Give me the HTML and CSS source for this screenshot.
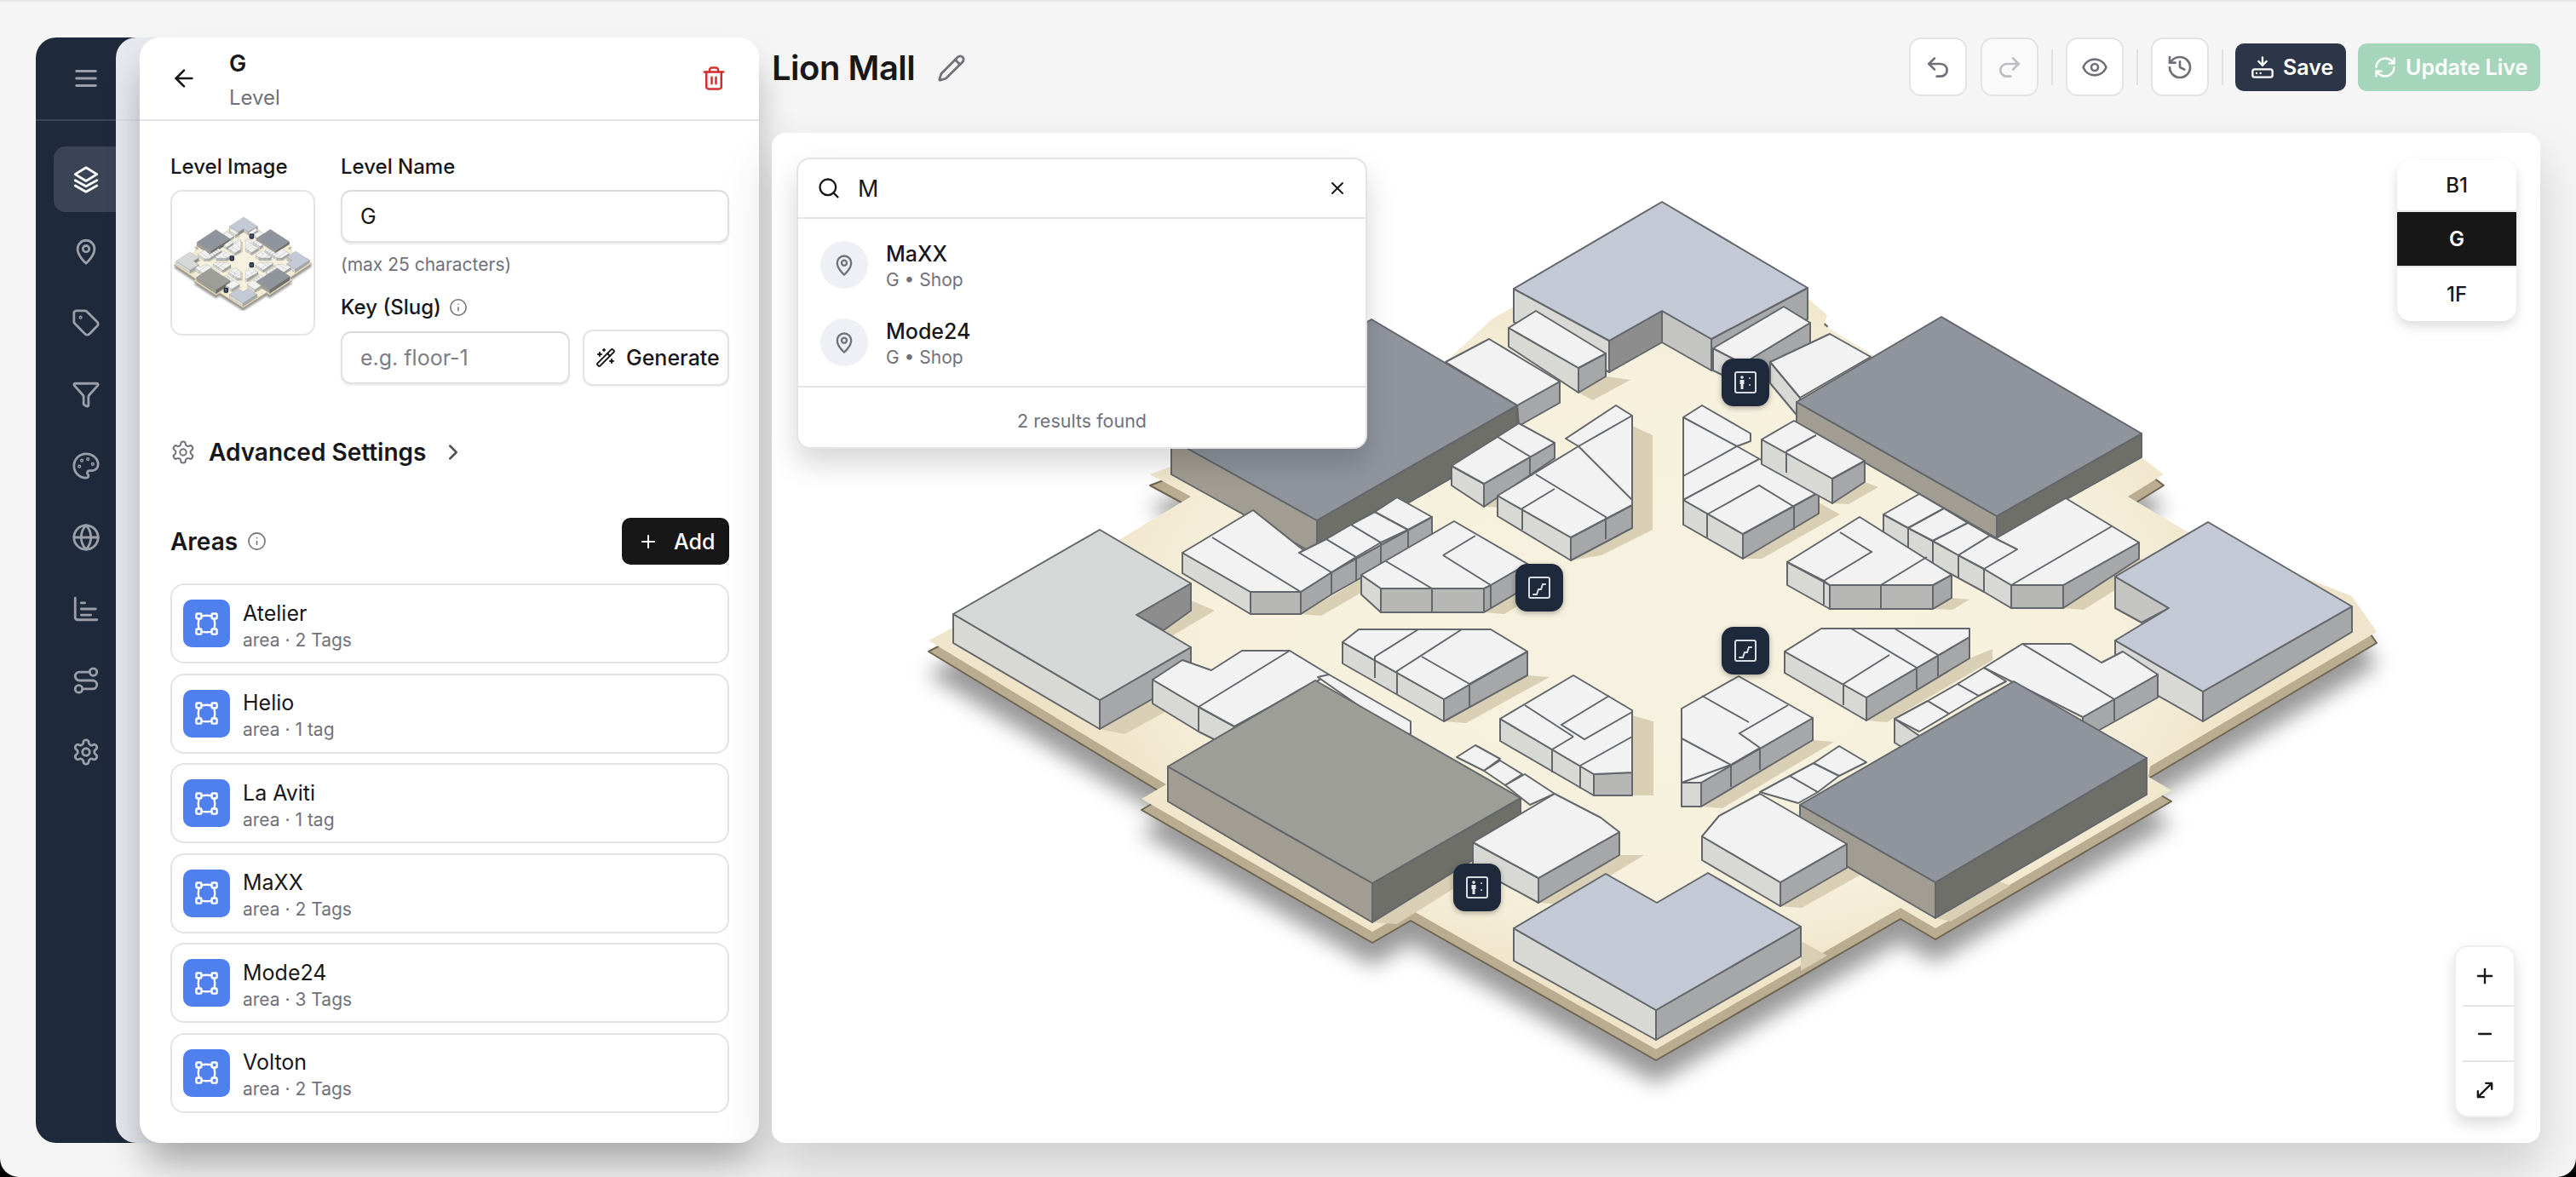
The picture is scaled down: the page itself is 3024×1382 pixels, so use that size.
FILE: index.html
```html
<!DOCTYPE html>
<html lang="en">
<head>
    <meta charset="UTF-8">
    <meta name="viewport" content="width=device-width, initial-scale=1.0">
    <title>Lion Mall</title>
    <link rel="stylesheet" href="styles.css">
</head>
<body>

<!-- icon set -->
<svg class="sprite" aria-hidden="true">
    <symbol id="i-menu" viewBox="0 0 24 24"><path d="M4 6h16M4 12h16M4 18h16"/></symbol>
    <symbol id="i-layers" viewBox="0 0 24 24"><path d="M12 2l9 5.5-9 5.5-9-5.5z"/><path d="M3 12.5l9 5 9-5"/><path d="M3 17l9 5 9-5"/></symbol>
    <symbol id="i-pin" viewBox="0 0 24 24"><path d="M19 10c0 6-7 12-7 12s-7-6-7-12a7 7 0 0 1 14 0z"/><circle cx="12" cy="10" r="2.6"/></symbol>
    <symbol id="i-tag" viewBox="0 0 24 24"><path d="M12.586 2.586A2 2 0 0 0 11.172 2H4a2 2 0 0 0-2 2v7.172a2 2 0 0 0 .586 1.414l8.704 8.704a2.426 2.426 0 0 0 3.42 0l6.58-6.58a2.426 2.426 0 0 0 0-3.42z"/><circle cx="7.5" cy="7.5" r=".5"/></symbol>
    <symbol id="i-filter" viewBox="0 0 24 24"><path d="M10 20a1 1 0 0 0 .553.895l2 1A1 1 0 0 0 14 21v-7a2 2 0 0 1 .517-1.341L21.74 4.67A1 1 0 0 0 21 3H3a1 1 0 0 0-.742 1.67l7.225 7.989A2 2 0 0 1 10 14z"/></symbol>
    <symbol id="i-palette" viewBox="0 0 24 24"><path d="M12 22a1 1 0 0 1 0-20 10 9 0 0 1 10 9 5 5 0 0 1-5 5h-2.25a1.75 1.75 0 0 0-1.4 2.8l.3.4a1.75 1.75 0 0 1-1.4 2.8z"/><circle cx="13.5" cy="6.5" r=".5"/><circle cx="17.5" cy="10.5" r=".5"/><circle cx="6.5" cy="12.5" r=".5"/><circle cx="8.5" cy="7.5" r=".5"/></symbol>
    <symbol id="i-globe" viewBox="0 0 24 24"><circle cx="12" cy="12" r="10"/><path d="M12 2a14.5 14.5 0 0 0 0 20 14.5 14.5 0 0 0 0-20"/><path d="M2 12h20"/></symbol>
    <symbol id="i-chart" viewBox="0 0 24 24"><path d="M3 3v16a2 2 0 0 0 2 2h16"/><path d="M8 7h3M8 12h12M8 17h8"/></symbol>
    <symbol id="i-route" viewBox="0 0 24 24"><circle cx="6" cy="19" r="3"/><path d="M9 19h8.5a3.5 3.5 0 0 0 0-7h-11a3.5 3.5 0 0 1 0-7H15"/><circle cx="18" cy="5" r="3"/></symbol>
    <symbol id="i-gear" viewBox="0 0 24 24"><path d="M12.22 2h-.44a2 2 0 0 0-2 2v.18a2 2 0 0 1-1 1.73l-.43.25a2 2 0 0 1-2 0l-.15-.08a2 2 0 0 0-2.73.73l-.22.38a2 2 0 0 0 .73 2.73l.15.1a2 2 0 0 1 1 1.72v.51a2 2 0 0 1-1 1.74l-.15.09a2 2 0 0 0-.73 2.73l.22.38a2 2 0 0 0 2.73.73l.15-.08a2 2 0 0 1 2 0l.43.25a2 2 0 0 1 1 1.73V20a2 2 0 0 0 2 2h.44a2 2 0 0 0 2-2v-.18a2 2 0 0 1 1-1.73l.43-.25a2 2 0 0 1 2 0l.15.08a2 2 0 0 0 2.73-.73l.22-.39a2 2 0 0 0-.73-2.73l-.15-.08a2 2 0 0 1-1-1.74v-.5a2 2 0 0 1 1-1.74l.15-.09a2 2 0 0 0 .73-2.73l-.22-.38a2 2 0 0 0-2.73-.73l-.15.08a2 2 0 0 1-2 0l-.43-.25a2 2 0 0 1-1-1.73V4a2 2 0 0 0-2-2z"/><circle cx="12" cy="12" r="3"/></symbol>
    <symbol id="i-back" viewBox="0 0 24 24"><path d="M12 19l-7-7 7-7"/><path d="M19 12H5"/></symbol>
    <symbol id="i-trash" viewBox="0 0 24 24"><path d="M3 6h18"/><path d="M19 6v14c0 1-1 2-2 2H7c-1 0-2-1-2-2V6"/><path d="M8 6V4c0-1 1-2 2-2h4c1 0 2 1 2 2v2"/><path d="M10 11v6M14 11v6"/></symbol>
    <symbol id="i-info" viewBox="0 0 24 24"><circle cx="12" cy="12" r="10"/><path d="M12 16v-4M12 8h.01"/></symbol>
    <symbol id="i-wand" viewBox="0 0 24 24"><path d="M21.64 3.64l-1.28-1.28a1.21 1.21 0 0 0-1.72 0L2.36 18.64a1.21 1.21 0 0 0 0 1.72l1.28 1.28a1.2 1.2 0 0 0 1.72 0L21.64 5.36a1.2 1.2 0 0 0 0-1.72"/><path d="M14 7l3 3M5 6v4M19 14v4M10 2v2M7 8H3M21 16h-4M11 3H9"/></symbol>
    <symbol id="i-chevron" viewBox="0 0 24 24"><path d="M9 18l6-6-6-6"/></symbol>
    <symbol id="i-plus" viewBox="0 0 24 24"><path d="M5 12h14M12 5v14"/></symbol>
    <symbol id="i-minus" viewBox="0 0 24 24"><path d="M6 12h12"/></symbol>
    <symbol id="i-area" viewBox="0 0 24 24"><path d="M19.5 7a24 24 0 0 1 0 10M4.5 7a24 24 0 0 0 0 10M7 19.5a24 24 0 0 0 10 0M7 4.5a24 24 0 0 1 10 0"/><rect x="17" y="17" width="5" height="5" rx="1"/><rect x="17" y="2" width="5" height="5" rx="1"/><rect x="2" y="17" width="5" height="5" rx="1"/><rect x="2" y="2" width="5" height="5" rx="1"/></symbol>
    <symbol id="i-pencil" viewBox="0 0 24 24"><path d="M21.174 6.812a1 1 0 0 0-3.986-3.987L3.842 16.174a2 2 0 0 0-.5.83l-1.321 4.352a.5.5 0 0 0 .623.622l4.353-1.32a2 2 0 0 0 .83-.497z"/><path d="M15 5l4 4"/></symbol>
    <symbol id="i-undo" viewBox="0 0 24 24"><path d="M9 14L4 9l5-5"/><path d="M4 9h10.5a5.5 5.5 0 0 1 0 11H11"/></symbol>
    <symbol id="i-redo" viewBox="0 0 24 24"><path d="M15 14l5-5-5-5"/><path d="M20 9H9.5a5.5 5.5 0 0 0 0 11H13"/></symbol>
    <symbol id="i-eye" viewBox="0 0 24 24"><path d="M2.062 12.348a1 1 0 0 1 0-.696 10.75 10.75 0 0 1 19.876 0 1 1 0 0 1 0 .696 10.75 10.75 0 0 1-19.876 0"/><circle cx="12" cy="12" r="3"/></symbol>
    <symbol id="i-history" viewBox="0 0 24 24"><path d="M3 12a9 9 0 1 0 9-9 9.75 9.75 0 0 0-6.74 2.74L3 8"/><path d="M3 3v5h5"/><path d="M12 7v5l4 2"/></symbol>
    <symbol id="i-save" viewBox="0 0 24 24"><path d="M12 2v8"/><path d="M16 6l-4 4-4-4"/><rect x="2" y="14" width="20" height="8" rx="2"/><path d="M6 18h.01M10 18h.01"/></symbol>
    <symbol id="i-sync" viewBox="0 0 24 24"><path d="M3 12a9 9 0 0 1 9-9 9.75 9.75 0 0 1 6.74 2.74L21 8"/><path d="M21 3v5h-5"/><path d="M21 12a9 9 0 0 1-9 9 9.75 9.75 0 0 1-6.74-2.74L3 16"/><path d="M8 16H3v5"/></symbol>
    <symbol id="i-search" viewBox="0 0 24 24"><circle cx="11" cy="11" r="8"/><path d="M21 21l-4.34-4.34"/></symbol>
    <symbol id="i-close" viewBox="0 0 24 24"><path d="M18 6L6 18M6 6l12 12"/></symbol>
    <symbol id="i-expand" viewBox="0 0 24 24"><path d="M11 19H5v-6M13 5h6v6M19 5L5 19"/></symbol>
</svg>

<div class="app">
    <nav class="rail">
        <div class="rail-head"><svg class="icon rail-icon"><use href="#i-menu"/></svg></div>
        <div class="rail-nav">
            <div class="rail-item active"><svg class="icon rail-icon"><use href="#i-layers"/></svg></div>
            <div class="rail-item"><svg class="icon rail-icon"><use href="#i-pin"/></svg></div>
            <div class="rail-item"><svg class="icon rail-icon"><use href="#i-tag"/></svg></div>
            <div class="rail-item"><svg class="icon rail-icon"><use href="#i-filter"/></svg></div>
            <div class="rail-item"><svg class="icon rail-icon"><use href="#i-palette"/></svg></div>
            <div class="rail-item"><svg class="icon rail-icon"><use href="#i-globe"/></svg></div>
            <div class="rail-item"><svg class="icon rail-icon"><use href="#i-chart"/></svg></div>
            <div class="rail-item"><svg class="icon rail-icon"><use href="#i-route"/></svg></div>
            <div class="rail-item"><svg class="icon rail-icon"><use href="#i-gear"/></svg></div>
        </div>
    </nav>
    <div class="rail-edge"><div class="rail-edge-head"></div></div>

    <aside class="panel">
        <header class="panel-head">
            <svg class="icon back-icon"><use href="#i-back"/></svg>
            <div class="panel-title">
                <div class="panel-name">G</div>
                <div class="panel-kind">Level</div>
            </div>
            <svg class="icon trash-icon"><use href="#i-trash"/></svg>
        </header>

        <div class="panel-body">
            <div class="level-form">
                <div class="level-image-col">
                    <label class="field-label">Level Image</label>
                    <div class="level-image">
                        <svg class="thumb" viewBox="1070 210 1740 1060" preserveAspectRatio="none"><use href="#map-art"/></svg>
                    </div>
                </div>
                <div class="level-fields">
                    <label class="field-label">Level Name</label>
                    <div class="input">G</div>
                    <div class="hint">(max 25 characters)</div>
                    <label class="field-label key-label">Key (Slug) <svg class="icon info-icon"><use href="#i-info"/></svg></label>
                    <div class="key-row">
                        <div class="input input-key placeholder">e.g. floor-1</div>
                        <button class="generate"><svg class="icon wand-icon"><use href="#i-wand"/></svg>Generate</button>
                    </div>
                </div>
            </div>

            <div class="advanced">
                <svg class="icon adv-gear"><use href="#i-gear"/></svg>
                <span>Advanced Settings</span>
                <svg class="icon adv-chevron"><use href="#i-chevron"/></svg>
            </div>

            <div class="areas-head">
                <div class="areas-title">Areas <svg class="icon areas-info"><use href="#i-info"/></svg></div>
                <button class="add"><svg class="icon add-icon"><use href="#i-plus"/></svg>Add</button>
            </div>

            <div class="area-list">
                <div class="area-card">
                    <div class="area-icon"><svg class="icon"><use href="#i-area"/></svg></div>
                    <div class="area-text"><div class="area-name">Atelier</div><div class="area-meta">area · 2 Tags</div></div>
                </div>
                <div class="area-card">
                    <div class="area-icon"><svg class="icon"><use href="#i-area"/></svg></div>
                    <div class="area-text"><div class="area-name">Helio</div><div class="area-meta">area · 1 tag</div></div>
                </div>
                <div class="area-card">
                    <div class="area-icon"><svg class="icon"><use href="#i-area"/></svg></div>
                    <div class="area-text"><div class="area-name">La Aviti</div><div class="area-meta">area · 1 tag</div></div>
                </div>
                <div class="area-card">
                    <div class="area-icon"><svg class="icon"><use href="#i-area"/></svg></div>
                    <div class="area-text"><div class="area-name">MaXX</div><div class="area-meta">area · 2 Tags</div></div>
                </div>
                <div class="area-card">
                    <div class="area-icon"><svg class="icon"><use href="#i-area"/></svg></div>
                    <div class="area-text"><div class="area-name">Mode24</div><div class="area-meta">area · 3 Tags</div></div>
                </div>
                <div class="area-card">
                    <div class="area-icon"><svg class="icon"><use href="#i-area"/></svg></div>
                    <div class="area-text"><div class="area-name">Volton</div><div class="area-meta">area · 2 Tags</div></div>
                </div>
            </div>
        </div>
    </aside>

    <main class="main">
        <div class="toolbar">
            <div class="title-wrap">
                <h1 class="title">Lion Mall</h1>
                <svg class="icon pencil-icon"><use href="#i-pencil"/></svg>
            </div>
            <div class="tools">
                <button class="tool tool-first"><svg class="icon"><use href="#i-undo"/></svg></button>
                <button class="tool disabled"><svg class="icon"><use href="#i-redo"/></svg></button>
                <span class="tool-sep"></span>
                <button class="tool"><svg class="icon"><use href="#i-eye"/></svg></button>
                <span class="tool-sep"></span>
                <button class="tool"><svg class="icon"><use href="#i-history"/></svg></button>
                <span class="tool-sep"></span>
                <button class="btn-save"><svg class="icon"><use href="#i-save"/></svg>Save</button>
                <button class="btn-live"><svg class="icon"><use href="#i-sync"/></svg>Update Live</button>
            </div>
        </div>

        <section class="canvas">
            <svg class="map" viewBox="906 156 2076 1186">
                <defs>
                    <radialGradient id="floor-fill" gradientUnits="userSpaceOnUse" cx="1950" cy="740" r="860" gradientTransform="translate(0 296) scale(1 .6)">
                        <stop offset="0" stop-color="#f7f2df"/>
                        <stop offset=".62" stop-color="#f6f0dc"/>
                        <stop offset=".85" stop-color="#eee2c5"/>
                        <stop offset="1" stop-color="#f0e6cf"/>
                    </radialGradient>
                    <g id="m-box"><rect x="-28" y="-28" width="56" height="56" rx="14" class="mk-bg"/><rect x="-12" y="-12" width="24" height="24" rx="2" class="mk-line"/></g>
                    <g id="m-lift"><use href="#m-box"/><circle cx="-4" cy="-6" r="1.8" class="mk-fill"/><path d="M-6.5 -3h5v5h-1v6h-3v-6h-1z" class="mk-fill"/><path d="M5 -5v.1M5 3v.1" class="mk-line"/></g>
                    <g id="m-stair"><use href="#m-box"/><path d="M-7 8h4l2-6h3l2-6h3" class="mk-line"/></g>
                </defs>
                <g id="map-art">
                    <!-- slab -->
                    <polygon class="slab-edge" points="1951,260 2122,350 2145,370 2141,382 2199,417 2514,537 2540,557 2498,583 2567,624 2761,700 2790,742 2524,900 2522,912 2549,928 2272,1090 2231,1066 1944,1232 1656,1068 1611,1094 1340,938 1369,921 1090,752 1315,633 1398,583 1350,557 1697,425 1751,375 1777,360" transform="translate(0 13)"/>
                    <polygon class="slab" points="1951,260 2122,350 2145,370 2141,382 2199,417 2514,537 2540,557 2498,583 2567,624 2761,700 2790,742 2524,900 2522,912 2549,928 2272,1090 2231,1066 1944,1232 1656,1068 1611,1094 1340,938 1369,921 1090,752 1315,633 1398,583 1350,557 1697,425 1751,375 1777,360"/>

                    <!-- cast shadows -->
                    <g class="cast">
                        <polygon points="1853,461 1885,442 1914,446 1870,470"/>
                        <polygon points="1916,500 1940,511 1940,622 1880,652 1844,658 1916,620"/>
                        <polygon points="1742,595 1825,538 1845,542 1770,596"/>
                        <polygon points="1527,721 1681,632 1705,634 1551,723"/>
                        <polygon points="1742,719 1793,689 1817,691 1766,721"/>
                        <polygon points="2135,590 2160,604 2068,656 2046,656 2135,603"/>
                        <polygon points="2151,591 2189,566 2205,572 2170,592"/>
                        <polygon points="2269,715 2291,702 2312,704 2292,716"/>
                        <polygon points="2422,714 2511,656 2535,660 2446,716"/>
                        <polygon points="2191,846 2312,773 2339,762 2339,775 2215,848"/>
                        <polygon points="1695,847 1793,793 1819,795 1721,849"/>
                        <polygon points="1916,840 1941,847 1941,934 1916,934"/>
                        <polygon points="1997,947 2128,869 2153,871 2022,949"/>
                        <polygon points="2090,1064 2168,1019 2195,1021 2115,1066"/>
                        <polygon points="1806,1060 1901,1004 1930,1004 1835,1062"/>
                        <polygon points="1398,705 1426,717 1370,750 1366,738"/>
                        <polygon points="1291,856 1353,820 1375,832 1320,862"/>
                        <polygon points="2114,1105 2145,1122 2114,1140"/>
                        <polygon points="1611,1083 1785,975 1800,985 1640,1085"/>
                        <polygon points="2272,1078 2345,1034 2360,1040 2290,1082"/>
                    </g>

                    <!-- top wing -->
                    <g class="blocks">
                        <polygon class="wall-l" points="1777,339 1889,400 1889,437 1777,378"/>
                        <polygon class="wall-d" points="1889,400 1951,365 1951,402 1889,437"/>
                        <polygon class="wall-l2" points="1951,365 2009,398 2009,435 1951,402"/>
                        <polygon class="wall-r" points="2009,398 2122,338 2122,375 2009,435"/>
                        <polygon class="roof-blue" points="1951,237 2122,338 2009,398 1951,365 1889,400 1777,339"/>

                        <polygon class="wall-l" points="1771,385 1853,432 1853,461 1771,407"/>
                        <polygon class="wall-r" points="1853,432 1885,415 1885,442 1853,461"/>
                        <polygon class="roof" points="1803,365 1885,415 1853,432 1771,385"/>
                        <polygon class="wall-r" points="1781,476 1831,448 1831,473 1783,500"/>
                        <polygon class="roof" points="1748,398 1831,448 1781,476 1697,425"/>

                        <polygon class="wall-l" points="2011,409 2046,427 2046,452 2011,435"/>
                        <polygon class="wall-r" points="2046,427 2125,379 2125,404 2046,452"/>
                        <polygon class="roof" points="2011,409 2094,360 2125,379 2046,427"/>
                        <polygon class="wall-l" points="2078,425 2113,467 2113,492 2078,450"/>
                        <polygon class="roof" points="2078,425 2148,392 2196,419 2113,467"/>

                        <!-- dark anchors, upper pair -->
                        <polygon class="wall-warm" points="1375,516 1546,611 1546,652 1375,557"/>
                        <polygon class="wall-dark" points="1546,611 1781,476 1781,517 1546,652"/>
                        <polygon class="roof-dark" points="1610,375 1781,476 1546,611 1375,516"/>
                        <polygon class="wall-warm" points="2109,472 2344,606 2344,632 2109,497"/>
                        <polygon class="wall-dark" points="2344,606 2514,509 2514,537 2344,632"/>
                        <polygon class="roof-dark" points="2279,372 2514,509 2344,606 2109,472"/>

                        <!-- upper centre clusters -->
                        <polygon class="wall-l" points="1704,547 1742,568 1742,595 1704,570"/>
                        <polygon class="wall-r" points="1742,568 1825,520 1825,538 1742,595"/>
                        <polygon class="roof" points="1704,547 1783,497 1825,520 1742,568"/>
                        <path class="seam" d="M1758,513L1796,536V557"/>

                        <polygon class="wall-l" points="1758,582 1844,631 1844,658 1758,606"/>
                        <polygon class="wall-r" points="1844,631 1916,593 1916,620 1844,658"/>
                        <polygon class="roof" points="1758,582 1853,524 1838,515 1897,476 1916,488 1916,593 1844,631"/>
                        <path class="seam" d="M1853,524L1916,488M1853,524L1916,587M1803,557L1885,607V633M1825,574L1787,597V622"/>

                        <polygon class="wall-l" points="1976,587 2046,627 2046,656 1976,616"/>
                        <polygon class="wall-r" points="2046,627 2135,578 2135,603 2046,656"/>
                        <polygon class="roof" points="1976,490 1998,476 2055,509 2055,518 2039,524 2135,578 2046,627 1976,587"/>
                        <path class="seam" d="M1976,490L2039,524M1976,559L2039,524M1976,587L2065,539M2004,604L2065,570L2106,595V622M2004,604V631"/>

                        <polygon class="wall-l" points="2068,516 2151,562 2151,591 2068,545"/>
                        <polygon class="wall-r" points="2151,562 2189,541 2189,566 2151,591"/>
                        <polygon class="roof" points="2068,516 2106,494 2189,541 2151,562"/>
                        <path class="seam" d="M2097,530L2132,511M2097,530V555"/>

                        <!-- left upper shops -->
                        <polygon class="wall-l" points="1388,649 1468,695 1468,721 1388,673"/>
                        <polygon class="wall-f" points="1468,695 1527,695 1527,721 1468,721"/>
                        <polygon class="wall-r" points="1527,695 1563,672 1681,607 1681,632 1563,698 1527,721"/>
                        <polygon class="roof" points="1388,649 1471,599 1563,672 1527,695 1468,695"/>
                        <polygon class="roof" points="1525,649 1557,633 1592,654 1563,672"/>
                        <polygon class="roof" points="1557,633 1586,616 1621,637 1592,654"/>
                        <polygon class="roof" points="1586,616 1614,601 1653,622 1621,637"/>
                        <polygon class="roof" points="1614,601 1640,584 1681,607 1653,622"/>
                        <path class="seam" d="M1423,631L1527,695M1563,672V698M1592,654V682M1621,637V665M1653,622V650"/>

                        <polygon class="wall-l" points="1598,675 1621,691 1621,719 1598,698"/>
                        <polygon class="wall-f" points="1621,691 1742,691 1742,719 1621,719"/>
                        <polygon class="wall-r" points="1742,691 1793,662 1793,689 1742,719"/>
                        <polygon class="roof" points="1598,675 1707,612 1793,662 1750,687 1742,691 1621,691"/>
                        <path class="seam" d="M1627,659L1681,691V719M1694,652L1732,629M1694,652L1750,687V714"/>

                        <!-- right upper shops -->
                        <polygon class="wall-l" points="2211,604 2329,668 2329,695 2211,631"/>
                        <polygon class="wall-l" points="2329,668 2361,687 2361,714 2329,695"/>
                        <polygon class="wall-f" points="2361,687 2422,687 2422,714 2361,714"/>
                        <polygon class="wall-r" points="2422,687 2511,637 2511,656 2422,714"/>
                        <polygon class="roof" points="2345,631 2425,585 2511,637 2422,687 2361,687 2329,668"/>
                        <polygon class="roof" points="2211,604 2253,580 2282,597 2240,620"/>
                        <polygon class="roof" points="2240,620 2282,597 2310,614 2269,635"/>
                        <polygon class="roof" points="2269,635 2310,614 2336,629 2299,652"/>
                        <polygon class="roof" points="2299,652 2336,629 2368,645 2329,668"/>
                        <path class="seam" d="M2479,618L2361,687M2240,620V647M2269,635V662M2299,652V679"/>

                        <polygon class="wall-l" points="2098,660 2148,687 2148,715 2098,687"/>
                        <polygon class="wall-f" points="2148,687 2269,687 2269,715 2148,715"/>
                        <polygon class="wall-r" points="2269,687 2291,675 2291,702 2269,715"/>
                        <polygon class="roof" points="2098,660 2183,607 2291,675 2269,687 2148,687 2141,682"/>
                        <path class="seam" d="M2160,625L2197,648L2141,682V710M2262,654L2208,687V715"/>

                        <!-- side wings -->
                        <polygon class="wall-d" points="1334,722 1398,685 1398,717 1366,740"/>
                        <polygon class="wall-l" points="1119,721 1291,822 1291,856 1119,755"/>
                        <polygon class="wall-r" points="1291,822 1398,760 1398,795 1291,856"/>
                        <polygon class="roof-light" points="1119,721 1291,622 1398,685 1334,722 1398,760 1291,822"/>

                        <polygon class="wall-l2" points="2483,677 2546,714 2514,731 2483,714"/>
                        <polygon class="wall-l" points="2483,752 2586,812 2586,847 2483,788"/>
                        <polygon class="wall-r" points="2586,812 2761,712 2761,742 2586,847"/>
                        <polygon class="roof-blue" points="2592,613 2761,712 2586,812 2483,752 2546,714 2483,677"/>

                        <!-- lower centre clusters -->
                        <polygon class="wall-l" points="1576,754 1695,821 1695,847 1576,779"/>
                        <polygon class="wall-r" points="1695,821 1793,765 1793,793 1695,847"/>
                        <polygon class="roof" points="1576,754 1595,739 1750,739 1793,765 1695,821"/>
                        <path class="seam" d="M1665,739L1614,771V796M1716,739L1640,788V815M1669,771L1725,803V830M1793,765L1725,803"/>

                        <polygon class="wall-l" points="2095,765 2191,819 2191,846 2095,790"/>
                        <polygon class="wall-r" points="2191,819 2312,748 2312,773 2191,846"/>
                        <polygon class="roof" points="2095,765 2138,738 2312,738 2312,748 2191,819"/>
                        <path class="seam" d="M2224,738L2275,769V794M2173,738L2250,784V809M2218,769L2164,803V828"/>

                        <polygon class="wall-l" points="1761,844 1871,909 1871,934 1761,870"/>
                        <polygon class="wall-f" points="1871,909 1916,907 1916,934 1871,934"/>
                        <polygon class="roof" points="1761,844 1847,793 1916,834 1916,907 1871,909"/>
                        <path class="seam" d="M1790,828L1847,865M1889,817L1833,851L1860,868L1916,836M1822,880L1847,865M1855,899L1916,865M1822,880V907M1855,899V926"/>

                        <polygon class="wall-l" points="1974,919 1997,919 1997,947 1974,947"/>
                        <polygon class="wall-r" points="1997,919 2128,843 2128,869 1997,947"/>
                        <polygon class="roof" points="1974,832 2041,794 2128,843 1997,919 1974,919"/>
                        <path class="seam" d="M1998,817L2053,848M2099,828L2042,861L2066,878M1974,867L2032,898V924M2066,878V904M1974,919L2032,898M2066,878L2032,898"/>

                        <!-- lower shops -->
                        <polygon class="wall-l" points="1353,798 1407,830 1449,853 1449,880 1407,859 1353,826"/>
                        <polygon class="roof" points="1353,798 1388,775 1422,787 1458,764 1514,764 1560,792 1449,853 1407,830"/>
                        <path class="seam" d="M1407,830L1514,764M1407,830V859"/>
                        <polygon class="roof" points="1547,795 1560,792 1656,847 1656,862 1640,860"/>

                        <polygon class="wall-l" points="2224,844 2262,870 2262,895 2224,872"/>
                        <polygon class="roof" points="2224,844 2263,823 2288,838 2253,859"/>
                        <polygon class="roof" points="2263,823 2298,803 2323,817 2288,838"/>
                        <polygon class="roof" points="2298,803 2329,784 2355,800 2323,817"/>
                        <polygon class="wall-r" points="2445,842 2533,792 2533,819 2445,868"/>
                        <polygon class="roof" points="2329,784 2374,756 2431,756 2467,778 2492,765 2533,792 2445,842"/>
                        <path class="seam" d="M2374,756L2482,821V847"/>

                        <!-- dark anchors, lower pair -->
                        <polygon class="wall-warm" points="1371,900 1611,1037 1611,1083 1371,941"/>
                        <polygon class="wall-dark" points="1611,1037 1785,937 1785,975 1611,1083"/>
                        <polygon class="roof-grey" points="1544,799 1785,937 1611,1037 1371,900"/>

                        <polygon class="wall-warm" points="2113,945 2272,1036 2272,1078 2113,985"/>
                        <polygon class="wall-dark" points="2272,1036 2520,890 2520,933 2272,1078"/>

                        <polygon class="roof" points="2066,930 2101,911 2134,930 2111,943"/>
                        <polygon class="roof" points="2101,911 2129,896 2159,911 2134,930"/>
                        <polygon class="roof" points="2129,896 2159,876 2191,895 2159,911"/>
                        <polygon class="roof-dark" points="2364,800 2520,890 2272,1036 2113,945"/>

                        <polygon class="roof" points="1710,889 1732,875 1761,891 1742,905"/>
                        <polygon class="roof" points="1742,905 1761,893 1787,909 1767,922"/>
                        <polygon class="roof" points="1767,922 1790,909 1825,932 1796,945"/>

                        <polygon class="wall-l" points="1729,989 1806,1031 1806,1060 1729,1018"/>
                        <polygon class="wall-r" points="1806,1031 1901,977 1901,1004 1806,1060"/>
                        <polygon class="roof" points="1729,989 1825,932 1879,960 1901,977 1806,1031"/>

                        <polygon class="wall-l" points="1998,982 2090,1036 2090,1064 1998,1010"/>
                        <polygon class="wall-r" points="2090,1036 2168,991 2168,1019 2090,1064"/>
                        <polygon class="roof" points="1998,982 2018,958 2066,932 2168,991 2090,1036"/>

                        <polygon class="wall-l" points="1777,1090 1944,1186 1944,1221 1777,1128"/>
                        <polygon class="wall-r" points="1944,1186 2114,1088 2114,1123 1944,1221"/>
                        <polygon class="roof-blue" points="1777,1090 1885,1026 1945,1060 2005,1025 2114,1088 1944,1186"/>
                    </g>

                    <use href="#m-lift" x="2049" y="449"/>
                    <use href="#m-stair" x="1807" y="690"/>
                    <use href="#m-stair" x="2049" y="764"/>
                    <use href="#m-lift" x="1734" y="1042"/>
                </g>
            </svg>

            <div class="search">
                <div class="search-head">
                    <svg class="icon search-icon"><use href="#i-search"/></svg>
                    <span class="search-value">M</span>
                    <svg class="icon close-icon"><use href="#i-close"/></svg>
                </div>
                <div class="search-list">
                    <div class="result">
                        <div class="result-icon"><svg class="icon"><use href="#i-pin"/></svg></div>
                        <div class="result-text"><div class="result-name">MaXX</div><div class="result-meta">G • Shop</div></div>
                    </div>
                    <div class="result">
                        <div class="result-icon"><svg class="icon"><use href="#i-pin"/></svg></div>
                        <div class="result-text"><div class="result-name">Mode24</div><div class="result-meta">G • Shop</div></div>
                    </div>
                </div>
                <div class="search-foot">2 results found</div>
            </div>

            <div class="levels">
                <div class="level-btn">B1</div>
                <div class="level-btn current">G</div>
                <div class="level-btn">1F</div>
            </div>

            <div class="zoom">
                <div class="zoom-btn"><svg class="icon"><use href="#i-plus"/></svg></div>
                <div class="zoom-btn"><svg class="icon"><use href="#i-minus"/></svg></div>
                <div class="zoom-btn"><svg class="icon"><use href="#i-expand"/></svg></div>
            </div>
        </section>
    </main>
</div>

</body>
</html>
```
FILE: styles.css
```css
* {
    box-sizing: border-box;
}
html, body {
    margin: 0;
    padding: 0;
    height: 100%;
}
body {
    background: #000;
    font-family: Inter, "Liberation Sans", sans-serif;
    color: #18181b;
    overflow: hidden;
}
.sprite {
    position: absolute;
    width: 0;
    height: 0;
}
.icon {
    fill: none;
    stroke: currentColor;
    stroke-width: 2;
    stroke-linecap: round;
    stroke-linejoin: round;
    display: block;
    flex: none;
}
button {
    font-family: inherit;
    cursor: pointer;
}

.app {
    display: flex;
    height: 1382px;
    padding: 42px 42px 40px;
    background: #f5f5f5;
    border-top: 2px solid #e8e8e8;
    border-radius: 0 0 22px 22px;
    overflow: hidden;
}

/* left rail */
.rail {
    width: 130px;
    margin-right: -36px;
    flex: none;
    background: #1e293b;
    border-radius: 24px 0 0 24px;
    color: #9a9fa9;
}
.rail-head {
    height: 98px;
    border-bottom: 2px solid #3a4454;
    padding: 0 0 0 42px;
    display: flex;
    align-items: center;
}
.rail-icon {
    width: 34px;
    height: 34px;
}
.rail-nav {
    padding: 30px 0 0 21px;
    display: flex;
    flex-direction: column;
    gap: 7px;
}
.rail-item {
    height: 77px;
    padding-left: 21px;
    display: flex;
    align-items: center;
    border-radius: 14px 0 0 14px;
}
.rail-item.active {
    background: #3a4456;
    color: #fff;
}
.rail-edge {
    width: 60px;
    margin-right: -32px;
    flex: none;
    background: #e8e9ef;
    border-radius: 24px 0 0 24px;
}
.rail-edge-head {
    height: 98px;
    border-bottom: 2px solid #dcdde2;
}

/* level panel */
.panel {
    width: 727px;
    flex: none;
    background: #fff;
    border-radius: 24px;
    box-shadow: 0 30px 45px -6px rgba(0, 0, 0, 0.32);
}
.panel-head {
    height: 98px;
    border-bottom: 2px solid #e4e4e7;
    padding: 0 36px;
    display: flex;
    align-items: center;
}
.back-icon {
    width: 32px;
    height: 32px;
    color: #18181b;
}
.panel-title {
    margin-left: 37px;
    margin-top: 4px;
    flex: 1;
}
.panel-name {
    font-size: 27px;
    line-height: 32px;
    font-weight: 600;
}
.panel-kind {
    font-size: 24px;
    line-height: 30px;
    color: #71717a;
    margin-top: 9px;
}
.trash-icon {
    width: 30px;
    height: 30px;
    color: #d32f2f;
    margin-right: 2px;
}
.panel-body {
    padding: 40px 35px 0 36px;
}
.level-form {
    display: flex;
    gap: 30px;
}
.level-image-col {
    width: 170px;
    flex: none;
}
.field-label {
    display: block;
    font-size: 24px;
    line-height: 28px;
    font-weight: 500;
    white-space: nowrap;
}
.level-image {
    margin-top: 13px;
    height: 171px;
    border: 2px solid #e4e4e7;
    border-radius: 14px;
    display: flex;
    align-items: center;
    justify-content: center;
}
.thumb {
    width: 166px;
    height: 113px;
}
.level-fields {
    flex: 1;
}
.level-fields .field-label:first-child + .input {
    margin-top: 13px;
}
.input {
    height: 62px;
    padding: 0 21px;
    display: flex;
    align-items: center;
    font-size: 25px;
    background: #fff;
    border: 2px solid #e0e0e5;
    border-top-color: #d8d8de;
    border-radius: 12px;
    box-shadow: 0 2px 2px rgba(0, 0, 0, 0.08);
}
.hint {
    margin-top: 13px;
    font-size: 21px;
    line-height: 26px;
    color: #71717a;
}
.key-label {
    margin-top: 23px;
    display: flex;
    align-items: center;
    gap: 9px;
}
.info-icon {
    width: 22px;
    height: 22px;
    color: #71717a;
    stroke-width: 1.7;
}
.key-row {
    margin-top: 12px;
    display: flex;
    gap: 15px;
    align-items: center;
}
.input-key {
    width: 269px;
}
.placeholder {
    color: #7d7d87;
}
.generate {
    flex: 1;
    height: 66px;
    padding: 0 0 0 13px;
    display: flex;
    align-items: center;
    gap: 12px;
    font-size: 25px;
    font-weight: 500;
    color: #18181b;
    background: #fff;
    border: 2px solid #e4e4e7;
    border-radius: 12px;
    box-shadow: 0 1px 2px rgba(0, 0, 0, 0.06);
}
.wand-icon {
    width: 24px;
    height: 26px;
}
.advanced {
    margin-top: 58px;
    height: 40px;
    display: flex;
    align-items: center;
    font-size: 28px;
    font-weight: 600;
}
.adv-gear {
    width: 30px;
    height: 30px;
    color: #71717a;
    stroke-width: 1.6;
    margin-right: 15px;
}
.adv-chevron {
    width: 30px;
    height: 30px;
    color: #52525b;
    margin-left: 17px;
}
.areas-head {
    margin-top: 57px;
    display: flex;
    align-items: center;
    justify-content: space-between;
}
.areas-title {
    display: flex;
    align-items: center;
    gap: 11px;
    font-size: 28px;
    font-weight: 600;
}
.areas-info {
    width: 23px;
    height: 23px;
    color: #71717a;
    stroke-width: 1.7;
}
.add {
    width: 126px;
    height: 55px;
    display: flex;
    align-items: center;
    padding: 0 0 0 19px;
    gap: 18px;
    border: none;
    border-radius: 10px;
    background: #171717;
    color: #fff;
    font-size: 25px;
    font-weight: 500;
}
.add-icon {
    width: 24px;
    height: 24px;
}
.area-list {
    margin-top: 22px;
    display: flex;
    flex-direction: column;
    gap: 11.6px;
}
.area-card {
    height: 94px;
    padding-left: 13px;
    display: flex;
    align-items: center;
    gap: 15px;
    border: 2px solid #e4e4e7;
    border-radius: 16px;
}
.area-icon {
    width: 55px;
    height: 56px;
    border-radius: 10px;
    background: #4f80ee;
    color: #fff;
    display: flex;
    align-items: center;
    justify-content: center;
}
.area-icon svg {
    width: 29px;
    height: 29px;
}
.area-text {
    padding-top: 5px;
}
.area-name {
    font-size: 25px;
    line-height: 33px;
}
.area-meta {
    font-size: 21px;
    line-height: 29px;
    color: #71717a;
}

/* main column */
.main {
    flex: 1;
    margin-left: 15px;
    min-width: 0;
    display: flex;
    flex-direction: column;
}
.toolbar {
    height: 69px;
    flex: none;
    display: flex;
    align-items: center;
    justify-content: space-between;
}
.title-wrap {
    display: flex;
    align-items: center;
    gap: 26px;
    margin-top: 2px;
}
.title {
    margin: 0;
    font-size: 40px;
    font-weight: 600;
    letter-spacing: -0.5px;
}
.pencil-icon {
    width: 34px;
    height: 34px;
    color: #71717a;
}
.tools {
    display: flex;
    align-items: center;
}
.tool {
    width: 68px;
    height: 69px;
    display: flex;
    align-items: center;
    justify-content: center;
    margin-right: 15px;
    padding: 0;
    border: 2px solid #e4e4e7;
    border-radius: 14px;
    background: #fff;
    color: #6f6f78;
}
.tool-first {
    margin-right: 16px;
}
.tool svg {
    width: 32px;
    height: 32px;
}
.tool.disabled {
    background: #fafafa;
    color: #bcbcc2;
}
.tool-sep {
    width: 2px;
    height: 42px;
    background: #e0e0e3;
    margin-right: 15px;
}
.btn-save, .btn-live {
    height: 56px;
    display: flex;
    align-items: center;
    border: none;
    border-radius: 10px;
    color: #fff;
    font-size: 25px;
    font-weight: 600;
}
.btn-save {
    width: 130px;
    margin-left: -1px;
    padding: 0 0 0 18px;
    gap: 10px;
    background: #2d3648;
}
.btn-live {
    width: 214px;
    padding: 0 0 0 18px;
    gap: 10px;
    margin-left: 14px;
    background: #a5d6bc;
}
.btn-save svg, .btn-live svg {
    width: 28px;
    height: 28px;
}

/* map canvas */
.canvas {
    position: relative;
    flex: 1;
    margin-top: 43px;
    background: #fff;
    border-radius: 16px;
    box-shadow: 0 30px 60px rgba(0, 0, 0, 0.16);
    overflow: hidden;
}
.map {
    position: absolute;
    inset: 0;
    width: 100%;
    height: 100%;
}
.slab {
    fill: url(#floor-fill);
}
.slab-edge {
    fill: #b9ac90;
    stroke: #6e6450;
    stroke-width: 2;
    stroke-linejoin: round;
    filter: drop-shadow(0 26px 12px rgba(0, 0, 0, 0.4));
}
.cast polygon {
    fill: #d8cfb5;
}
.blocks polygon {
    stroke: #63666a;
    stroke-width: 2;
    stroke-linejoin: round;
}
.seam {
    fill: none;
    stroke: #63666a;
    stroke-width: 2;
}
.roof { fill: #f2f2f2; }
.roof-blue { fill: #c3cad6; }
.roof-dark { fill: #8f949d; }
.roof-grey { fill: #9e9e98; }
.roof-light { fill: #d6d8d8; }
.wall-l { fill: #d8d8d5; }
.wall-l2 { fill: #c4c4c2; }
.wall-r { fill: #a6a7a9; }
.wall-f { fill: #b7b7b6; }
.wall-d { fill: #8d8d8e; }
.wall-warm { fill: #a19d93; }
.wall-dark { fill: #6f6f6a; }
.mk-bg {
    fill: #1e293b;
    filter: drop-shadow(0 2px 3px rgba(0, 0, 0, 0.3));
}
.mk-line {
    fill: none;
    stroke: #d9dde3;
    stroke-width: 2;
    stroke-linecap: round;
}
.mk-fill {
    fill: #e6e9ee;
}

/* search overlay */
.search {
    position: absolute;
    left: 29px;
    top: 29px;
    width: 670px;
    height: 342px;
    background: #fff;
    border: 2px solid #e4e4e7;
    border-radius: 16px;
    box-shadow: 0 18px 34px rgba(0, 0, 0, 0.16);
}
.search-head {
    height: 70px;
    padding: 0 0 0 22px;
    display: flex;
    align-items: center;
    border-bottom: 2px solid #e4e4e7;
}
.search-icon {
    width: 28px;
    height: 28px;
}
.search-value {
    margin-left: 20px;
    font-size: 27px;
    flex: 1;
}
.close-icon {
    width: 24px;
    height: 24px;
    margin-right: 21px;
}
.search-list {
    height: 198px;
    padding-top: 8px;
    border-bottom: 2px solid #e4e4e7;
}
.result {
    height: 91px;
    padding-left: 26px;
    display: flex;
    align-items: center;
    gap: 21px;
}
.result-icon {
    width: 56px;
    height: 56px;
    border-radius: 50%;
    background: #eff0f5;
    color: #71717a;
    display: flex;
    align-items: center;
    justify-content: center;
}
.result-icon svg {
    width: 28px;
    height: 28px;
}
.result-text {
    padding-top: 4px;
}
.result-name {
    font-size: 25px;
    line-height: 32px;
    font-weight: 500;
}
.result-meta {
    font-size: 21px;
    line-height: 30px;
    color: #71717a;
}
.search-foot {
    height: 70px;
    padding-top: 7px;
    display: flex;
    align-items: center;
    justify-content: center;
    font-size: 21.5px;
    color: #71717a;
}

/* floor switcher */
.levels {
    position: absolute;
    right: 28px;
    top: 32px;
    width: 140px;
    border-radius: 16px;
    background: #fff;
    overflow: hidden;
    box-shadow: 0 6px 14px rgba(0, 0, 0, 0.14);
}
.level-btn {
    height: 59px;
    display: flex;
    align-items: center;
    justify-content: center;
    font-size: 24px;
    font-weight: 500;
}
.level-btn + .level-btn {
    height: 65px;
    border-top: 2px solid #e8e8e8;
}
.level-btn.current {
    background: #171717;
    color: #fff;
    font-weight: 600;
}

/* zoom controls */
.zoom {
    position: absolute;
    right: 29px;
    bottom: 30px;
    width: 72px;
    height: 202px;
    padding: 0 0 0 8px;
    background: #fff;
    border: 2px solid #eeeeef;
    border-radius: 16px;
    box-shadow: 0 8px 18px rgba(0, 0, 0, 0.14);
}
.zoom-btn {
    height: 65px;
    padding-right: 8px;
    display: flex;
    align-items: center;
    justify-content: center;
    border-bottom: 2px solid #e4e4e7;
    color: #18181b;
}
.zoom-btn:first-child {
    height: 70px;
}
.zoom-btn:last-child {
    border-bottom: none;
}
.zoom-btn svg {
    width: 28px;
    height: 28px;
}
```
